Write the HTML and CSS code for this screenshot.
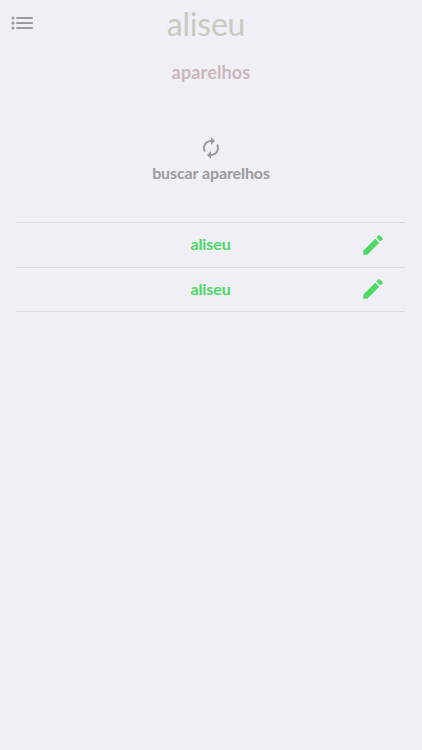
FILE: index.html
```html
<!DOCTYPE html>
<html lang="pt-BR">
<head>
  <meta charset="utf-8">
  <meta name="viewport" content="width=device-width, initial-scale=1">
  <title>aliseu</title>
  <link rel="stylesheet" href="styles.css">
</head>
<body>
  <header>
    <button class="menu" aria-label="menu">
      <svg width="22" height="14" viewBox="0 0 22 14">
        <circle cx="2" cy="2" r="1.6"/>
        <circle cx="2" cy="7" r="1.6"/>
        <circle cx="2" cy="12" r="1.6"/>
        <path d="M6 2h15M6 7h15M6 12h15"/>
      </svg>
    </button>
    <h1><span class="logo">aliseu</span></h1>
  </header>
  <main>
    <h2><span class="title">aparelhos</span></h2>
    <button class="search">
      <svg width="24" height="24" viewBox="0 0 24 24">
        <path d="M12 6v3l4-4-4-4v3c-4.42 0-8 3.58-8 8 0 1.57.46 3.03 1.24 4.26L6.7 14.8c-.45-.83-.7-1.79-.7-2.8 0-3.31 2.69-6 6-6zm6.76 1.74L17.3 9.2c.44.84.7 1.79.7 2.8 0 3.31-2.69 6-6 6v-3l-4 4 4 4v-3c4.42 0 8-3.58 8-8 0-1.57-.46-3.03-1.24-4.26z"/>
      </svg>
      <span class="search-text">buscar aparelhos</span>
    </button>
    <ul class="devices">
      <li>
        <span class="name">aliseu</span>
        <a class="edit" href="#" aria-label="editar">
          <svg width="26" height="26" viewBox="0 0 24 24">
            <path d="M3 17.25V21h3.75L17.81 9.94l-3.75-3.75L3 17.25zM20.71 7.04c.39-.39.39-1.02 0-1.41l-2.34-2.34c-.39-.39-1.02-.39-1.41 0l-1.83 1.83 3.75 3.75 1.83-1.83z"/>
          </svg>
        </a>
      </li>
      <li>
        <span class="name">aliseu</span>
        <a class="edit" href="#" aria-label="editar">
          <svg width="26" height="26" viewBox="0 0 24 24">
            <path d="M3 17.25V21h3.75L17.81 9.94l-3.75-3.75L3 17.25zM20.71 7.04c.39-.39.39-1.02 0-1.41l-2.34-2.34c-.39-.39-1.02-.39-1.41 0l-1.83 1.83 3.75 3.75 1.83-1.83z"/>
          </svg>
        </a>
      </li>
    </ul>
  </main>
</body>
</html>
```
FILE: styles.css
```css
* {
  box-sizing: border-box;
}
body {
  margin: 0;
  min-height: 100vh;
  background: #efeff5;
  font-family: Lato, sans-serif;
}
h1, h2 {
  margin: 0;
  text-align: center;
}
button {
  padding: 0;
  border: 0;
  background: none;
  font: inherit;
}
svg {
  display: block;
}
header {
  display: grid;
  grid-template-columns: 36px 1fr 46px;
  height: 48px;
}
.menu {
  align-self: start;
  padding: 16px 0 0 11px;
}
.menu svg {
  fill: #9c9ba0;
  stroke: none;
}
.menu path {
  stroke: #9c9ba0;
  stroke-width: 2;
  stroke-linecap: round;
}
h1 {
  font-size: 32px;
  font-weight: 400;
  line-height: 48px;
  letter-spacing: -0.2px;
  color: #cac9c0;
}
h2 {
  font-size: 18px;
  font-weight: 700;
  line-height: 49px;
  letter-spacing: 0.15px;
  color: #ccb6be;
}
.search {
  display: flex;
  flex-direction: column;
  align-items: center;
  width: 100%;
  margin-top: 39px;
  color: #9c9ba0;
}
.search svg {
  fill: #9c9ba0;
}
.search-text {
  font-size: 16px;
  font-weight: 700;
  line-height: 26px;
  letter-spacing: -0.1px;
}
.devices {
  margin: 36px 17px 0 16px;
  padding: 0;
  border-top: 1px solid #dcdce1;
  list-style: none;
}
.devices li {
  display: grid;
  grid-template-columns: 64px 1fr 64px;
  align-items: center;
  height: 44.5px;
  border-bottom: 1px solid #dcdce1;
}
.name {
  grid-column: 2;
  padding-bottom: 2px;
  text-align: center;
  font-size: 16px;
  font-weight: 700;
  letter-spacing: -0.1px;
  color: #4cd964;
}
.edit {
  justify-self: center;
}
.edit svg {
  fill: #4cd964;
}
```
